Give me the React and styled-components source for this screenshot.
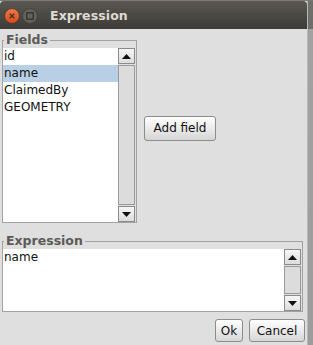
import React from 'react';
import styled, { createGlobalStyle } from 'styled-components';

const Global = createGlobalStyle`
  html, body { margin: 0; padding: 0; background: #9d9d9d; }
  * { box-sizing: border-box; }
`;

const fields = ['id', 'name', 'ClaimedBy', 'GEOMETRY'];

const ScrollBar = () => (
    <Scroll>
        <ScrollButton>
            <svg width="9" height="5" viewBox="0 0 9 5"><path d="M4.5 0 L9 5 L0 5 Z" fill="#111" /></svg>
        </ScrollButton>
        <Thumb />
        <ScrollButton>
            <svg width="9" height="5" viewBox="0 0 9 5"><path d="M0 0 L9 0 L4.5 5 Z" fill="#111" /></svg>
        </ScrollButton>
    </Scroll>
);

const App = () => {
    return (
        <Window>
            <Global />
            <Dialog>
                <TitleBar>
                    <svg width="38" height="16" viewBox="0 0 38 16">
                        <defs>
                            <linearGradient id="cl" x1="0" y1="0" x2="0" y2="1">
                                <stop offset="0" stopColor="#f07a48" />
                                <stop offset="1" stopColor="#d24d1c" />
                            </linearGradient>
                        </defs>
                        <circle cx="8" cy="8" r="7.4" fill="url(#cl)" stroke="#3a2a22" strokeWidth="0.6" />
                        <path d="M5.6 5.6 L10.4 10.4 M10.4 5.6 L5.6 10.4" stroke="#4a2414" strokeWidth="1.3" />
                        <circle cx="26" cy="8" r="7.4" fill="#64625d" stroke="#36352f" strokeWidth="0.6" />
                        <rect x="22.8" y="4.8" width="6.4" height="6.4" fill="none" stroke="#2e2d2a" strokeWidth="1.2" />
                    </svg>
                    <Title>Expression</Title>
                </TitleBar>
                <Body>
                    <TopRow>
                        <Group $width={135}>
                            <Legend>Fields</Legend>
                            <ListBox $height={174}>
                                <Items>
                                    {fields.map(f => (
                                        <Row key={f} $selected={f === 'name'}>{f}</Row>
                                    ))}
                                </Items>
                                <ScrollBar />
                            </ListBox>
                        </Group>
                        <Button $width={72} $height={25}>Add field</Button>
                    </TopRow>
                    <Group $width={301} $top={11}>
                        <Legend>Expression</Legend>
                        <ListBox $height={62}>
                            <Items>
                                <Row>name</Row>
                            </Items>
                            <ScrollBar />
                        </ListBox>
                    </Group>
                    <Actions>
                        <Button $width={28} $height={23}>Ok</Button>
                        <Button $width={56} $height={23}>Cancel</Button>
                    </Actions>
                </Body>
            </Dialog>
            <Desktop />
        </Window>
    );
}

export default App;

const Window = styled.div`
  display: flex;
  width: 313px;
  height: 345px;
  overflow: hidden;
  padding-top: 1px;
  background: #7a7a78;
`;

const Dialog = styled.div`
  width: 307px;
  display: flex;
  flex-direction: column;
  background: #dfdfdf;
  font-family: "DejaVu Sans", "Liberation Sans", sans-serif;
`;

const Desktop = styled.div`
  flex: 1;
  background: linear-gradient(#6e6e6c 0, #6e6e6c 28px, #a2a2a2 28px, #9c9c9c);
  border-left: 1px solid #b8b8b8;
`;

const TitleBar = styled.div`
  height: 28px;
  display: flex;
  align-items: center;
  gap: 8px;
  padding: 1px 0 0 4px;
  background: linear-gradient(#5a5751, #3d3c38);
  border-radius: 4px 4px 0 0;
`;

const Title = styled.span`
  color: #dfdbd2;
  font-weight: bold;
  font-size: 12.5px;
  letter-spacing: 0.1px;
`;

const Body = styled.div`
  flex: 1;
  display: flex;
  flex-direction: column;
  padding: 4px 2px 0 2px;
`;

const TopRow = styled.div`
  display: flex;
  align-items: center;
  gap: 7px;
`;

const Group = styled.fieldset`
  margin: ${p => p.$top || 0}px 0 0 0;
  padding: 1px 1px 0 0;
  width: ${p => p.$width}px;
  min-width: 0;
  border: 1px solid #a2a2a2;
`;

const Legend = styled.legend`
  margin-left: 1px;
  padding: 0 2px;
  font-weight: bold;
  font-size: 12.5px;
  line-height: 14px;
  color: #5c5a57;
`;

const ListBox = styled.div`
  display: flex;
  height: ${p => p.$height}px;
`;

const Items = styled.div`
  flex: 1;
  background: #fff;
`;

const Row = styled.div`
  height: 17px;
  line-height: 17px;
  padding-left: 1px;
  font-size: 12px;
  color: #111;
  background: ${p => p.$selected ? '#b8cfe5' : 'transparent'};
`;

const Scroll = styled.div`
  width: 17px;
  display: flex;
  flex-direction: column;
  background: #dfdfdf;
`;

const ScrollButton = styled.div`
  height: 16px;
  display: flex;
  align-items: center;
  justify-content: center;
  border: 1px solid #8a8a8a;
  background: linear-gradient(#f6f6f6, #dcdcdc);
`;

const Thumb = styled.div`
  flex: 1;
  margin: 1px 0;
  border: 1px solid #9a9a9a;
  background: #dcdcdc;
`;

const Button = styled.div`
  width: ${p => p.$width}px;
  height: ${p => p.$height}px;
  display: flex;
  align-items: center;
  justify-content: center;
  font-size: 12px;
  color: #111;
  border: 1px solid #8c8c8c;
  border-radius: 3px;
  background: linear-gradient(#ffffff, #d6d6d6);
`;

const Actions = styled.div`
  display: flex;
  justify-content: flex-end;
  gap: 6px;
  margin-top: 7px;
`;
